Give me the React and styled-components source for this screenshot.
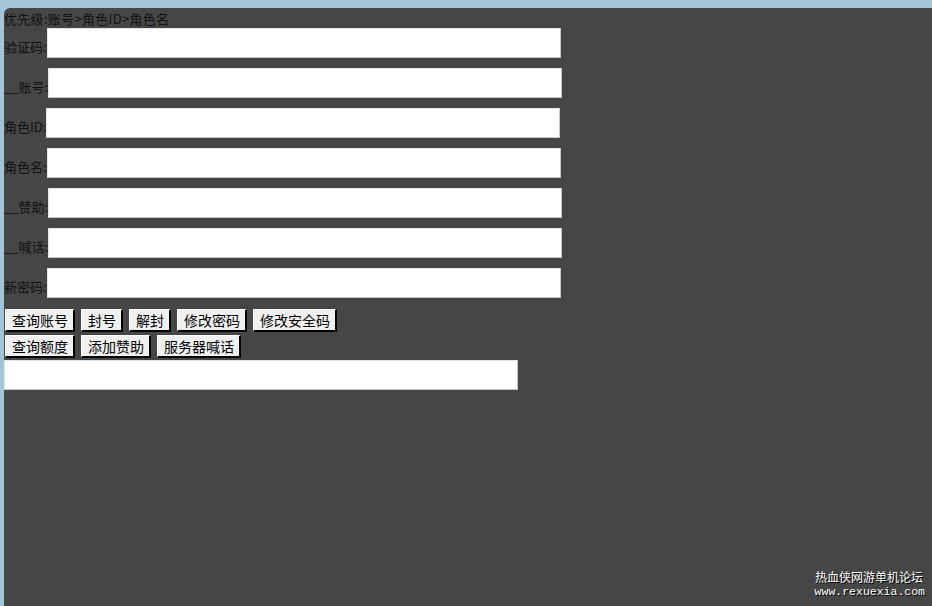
import React from "react";
import styled, { createGlobalStyle } from "styled-components";

const GlobalStyle = createGlobalStyle`
  html, body {
    margin: 0;
    padding: 0;
    height: 100%;
    background: #a3c4d9;
    overflow: hidden;
  }
  body {
    font-family: "Noto Sans CJK SC", "Noto Sans", sans-serif;
    font-size: 13px;
    color: #111;
  }
`;

const fields = ["验证码", "__账号", "角色ID", "角色名", "__赞助", "__喊话", "新密码"];
const buttonRows = [
  ["查询账号", "封号", "解封", "修改密码", "修改安全码"],
  ["查询额度", "添加赞助", "服务器喊话"],
];

export default function App() {
  return (
    <>
      <GlobalStyle />
      <Page>
        <Panel>
          <Hint>优先级:账号&gt;角色ID&gt;角色名</Hint>
          <Form>
            {fields.map((f) => (
              <Field key={f}>
                <Label>{f}:</Label>
                <Input />
              </Field>
            ))}
          </Form>
          <Actions>
            {buttonRows.map((row, i) => (
              <ButtonRow key={i}>
                {row.map((b) => (
                  <Button key={b}>{b}</Button>
                ))}
              </ButtonRow>
            ))}
          </Actions>
          <Output />
          <Watermark>
            <span className="cn">热血侠网游单机论坛</span>
            <span className="url">www.rexuexia.com</span>
          </Watermark>
        </Panel>
      </Page>
    </>
  );
}

const Page = styled.div`
  height: 100vh;
  box-sizing: border-box;
  padding: 8px 0 0 4px;
  display: flex;
`;

const Panel = styled.div`
  position: relative;
  flex: 1;
  background: #464646;
  border-top-left-radius: 6px;
  display: flex;
  flex-direction: column;
  align-items: flex-start;
`;

const Hint = styled.div`
  height: 20px;
  line-height: 20px;
  margin-top: 1px;
  margin-bottom: -1px;
  letter-spacing: 0.3px;
`;

const Form = styled.div`
  display: flex;
  flex-direction: column;
  gap: 10px;
`;

const Field = styled.div`
  display: flex;
  align-items: flex-end;
`;

const Label = styled.span`
  line-height: 18px;
  padding-bottom: 2px;
`;

const Input = styled.input`
  box-sizing: border-box;
  width: 514px;
  height: 30px;
  margin: 0;
  padding: 0 4px;
  background: #fff;
  border: 1px solid #c8c8c8;
  border-top-color: #e4e4e4;
  border-left-color: #e4e4e4;
  outline: none;
`;

const Actions = styled.div`
  display: flex;
  flex-direction: column;
  gap: 3px;
  margin-top: 11px;
  padding-left: 1px;
`;

const ButtonRow = styled.div`
  display: flex;
  gap: 6px;
`;

const Button = styled.button`
  box-sizing: border-box;
  height: 23px;
  padding: 0 5px 0 6px;
  margin: 0;
  font-family: "Noto Sans CJK SC", sans-serif;
  font-size: 14px;
  line-height: 19px;
  color: #000;
  background: #f0f0f0;
  border: 2px solid #000;
  border-top: 1px solid #fff;
  border-left: 1px solid #fff;
`;

const Output = styled(Input)`
  margin-top: 2px;
`;

const Watermark = styled.div`
  position: absolute;
  right: 9px;
  bottom: 8px;
  display: flex;
  flex-direction: column;
  align-items: flex-end;
  color: #fff;
  text-shadow: 1px 1px 0 #000;
  .cn {
    font-size: 12px;
    line-height: 16px;
  }
  .url {
    font-family: "Liberation Mono", monospace;
    font-size: 11.5px;
    line-height: 13px;
    margin-right: -2px;
  }
`;
